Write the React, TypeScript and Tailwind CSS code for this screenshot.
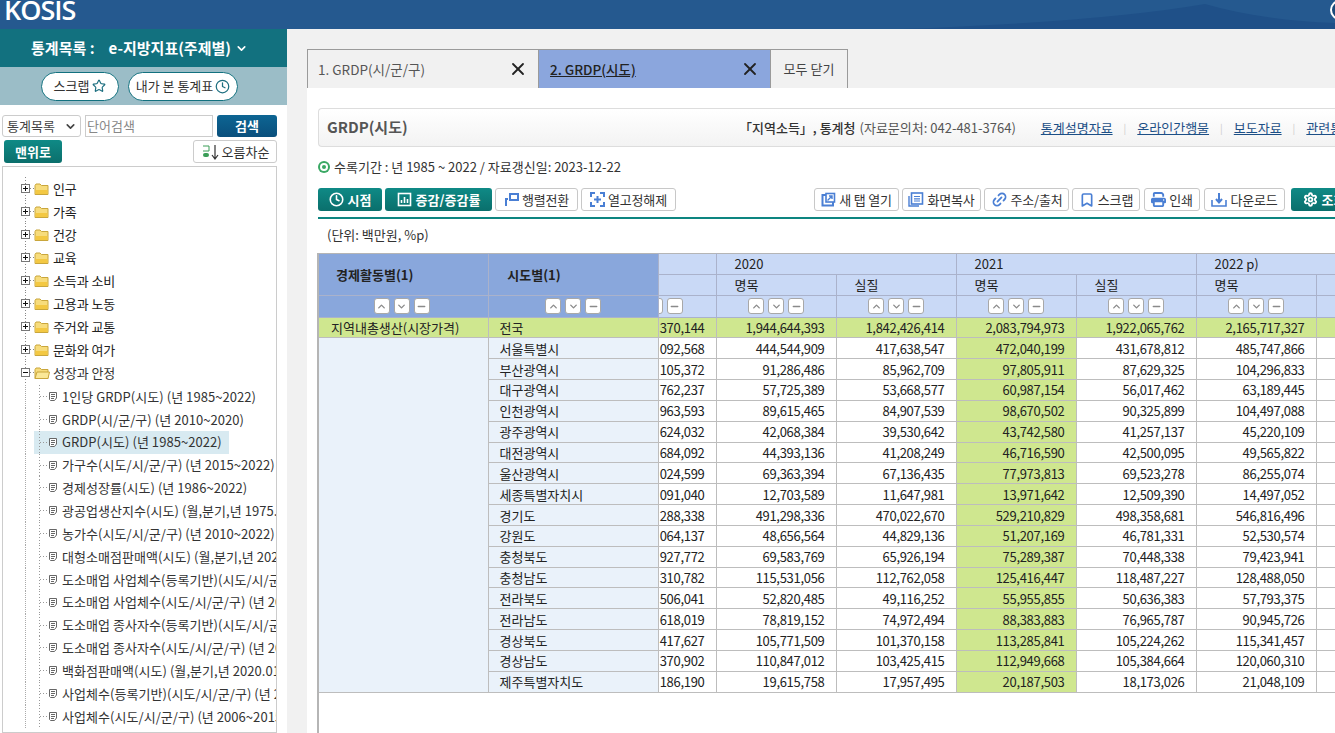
import { ChevronDown, ChevronUp, Minus, Star, Clock, X, Settings, Link2, Bookmark } from "lucide-react";
import { FaPrint } from "react-icons/fa6";

const FONT = { fontFamily: '"Noto Sans CJK KR", "Noto Sans", sans-serif' };

/* ---- data ---- */
const topics = ["인구", "가족", "건강", "교육", "소득과 소비", "고용과 노동", "주거와 교통", "문화와 여가"];

const docs = [
  "1인당 GRDP(시도) (년 1985~2022)",
  "GRDP(시/군/구) (년 2010~2020)",
  "GRDP(시도) (년 1985~2022)",
  "가구수(시도/시/군/구) (년 2015~2022)",
  "경제성장률(시도) (년 1986~2022)",
  "광공업생산지수(시도) (월,분기,년 1975.01~2023.11)",
  "농가수(시도/시/군/구) (년 2010~2022)",
  "대형소매점판매액(시도) (월,분기,년 2020.01~2023.11)",
  "도소매업 사업체수(등록기반)(시도/시/군/구) (년 2015~2021)",
  "도소매업 사업체수(시도/시/군/구) (년 2006~2015)",
  "도소매업 종사자수(등록기반)(시도/시/군/구) (년 2015~2021)",
  "도소매업 종사자수(시도/시/군/구) (년 2006~2015)",
  "백화점판매액(시도) (월,분기,년 2020.01~2023.11)",
  "사업체수(등록기반)(시도/시/군/구) (년 2015~2021)",
  "사업체수(시도/시/군/구) (년 2006~2015)",
];

const rows = [
  ["전국", "370,144", "1,944,644,393", "1,842,426,414", "2,083,794,973", "1,922,065,762", "2,165,717,327"],
  ["서울특별시", "092,568", "444,544,909", "417,638,547", "472,040,199", "431,678,812", "485,747,866"],
  ["부산광역시", "105,372", "91,286,486", "85,962,709", "97,805,911", "87,629,325", "104,296,833"],
  ["대구광역시", "762,237", "57,725,389", "53,668,577", "60,987,154", "56,017,462", "63,189,445"],
  ["인천광역시", "963,593", "89,615,465", "84,907,539", "98,670,502", "90,325,899", "104,497,088"],
  ["광주광역시", "624,032", "42,068,384", "39,530,642", "43,742,580", "41,257,137", "45,220,109"],
  ["대전광역시", "684,092", "44,393,136", "41,208,249", "46,716,590", "42,500,095", "49,565,822"],
  ["울산광역시", "024,599", "69,363,394", "67,136,435", "77,973,813", "69,523,278", "86,255,074"],
  ["세종특별자치시", "091,040", "12,703,589", "11,647,981", "13,971,642", "12,509,390", "14,497,052"],
  ["경기도", "288,338", "491,298,336", "470,022,670", "529,210,829", "498,358,681", "546,816,496"],
  ["강원도", "064,137", "48,656,564", "44,829,136", "51,207,169", "46,781,331", "52,530,574"],
  ["충청북도", "927,772", "69,583,769", "65,926,194", "75,289,387", "70,448,338", "79,423,941"],
  ["충청남도", "310,782", "115,531,056", "112,762,058", "125,416,447", "118,487,227", "128,488,050"],
  ["전라북도", "506,041", "52,820,485", "49,116,252", "55,955,855", "50,636,383", "57,793,375"],
  ["전라남도", "618,019", "78,819,152", "74,972,494", "88,383,883", "76,965,787", "90,945,726"],
  ["경상북도", "417,627", "105,771,509", "101,370,158", "113,285,841", "105,224,262", "115,341,457"],
  ["경상남도", "370,902", "110,847,012", "103,425,415", "112,949,668", "105,384,664", "120,060,310"],
  ["제주특별자치도", "186,190", "19,615,758", "17,957,495", "20,187,503", "18,173,026", "21,048,109"],
];

/* ---- tree icons ---- */
const FolderIcon = ({ open }: { open?: boolean }) => (
  <svg width="16" height="14" viewBox="0 0 16 14" className="shrink-0">
    <path d="M1 3.5 L2 2 H6 L7.5 3.5 H14 V12.5 H1 Z" fill="#f7dc7c" stroke="#c9a63c" />
    {open ? (
      <path d="M1 12.5 L3 6 H15.5 L14 12.5 Z" fill="#fbe897" stroke="#c9a63c" />
    ) : (
      <rect x="1.5" y="8" width="12" height="4" fill="#f3c843" />
    )}
  </svg>
);

const ExpandBox = ({ open }: { open?: boolean }) => (
  <svg width="31" height="23" viewBox="0 0 31 23" className="shrink-0">
    <path d="M22.5 0 V23" stroke="#888" strokeDasharray="1 2" />
    <path d="M27 11.5 H31" stroke="#888" strokeDasharray="1 2" />
    <rect x="18.5" y="7.5" width="8" height="8" fill="#fff" stroke="#777" />
    <path d="M20 11.5 H25" stroke="#111" />
    {!open && <path d="M22.5 9 V14" stroke="#111" />}
  </svg>
);

const DocIcon = () => (
  <svg width="24" height="23" viewBox="0 0 24 23" className="shrink-0">
    <path d="M5.5 0 V23" stroke="#999" strokeDasharray="1 2" />
    <path d="M6 11.5 H14" stroke="#999" strokeDasharray="1 2" />
    <path d="M15.5 7.5 H22.5 V13 L20.5 15.5 H16.5 L15.5 14.5 Z" fill="#fff" stroke="#666" />
    <path d="M17 9.5 H21 M17 11.5 H21 M17 13.5 H20" stroke="#666" />
  </svg>
);

const TopicRow = ({ label, open }: { label: string; open?: boolean }) => (
  <div className="flex h-[23px] items-center whitespace-nowrap">
    <ExpandBox open={open} />
    <FolderIcon open={open} />
    <span className={`ml-[3px] text-[13px] ${open ? "text-[#333]" : "text-[#222]"}`}>{label}</span>
  </div>
);

const DocRow = ({ label, active }: { label: string; active?: boolean }) => (
  <div className="flex h-[22.86px] items-center whitespace-nowrap">
    <span className="ml-[22px] h-[23px] w-[9px] shrink-0 border-l border-dotted border-[#aaa]" />
    <div className={`flex h-[23px] items-center pr-[7px] ${active ? "bg-[#d8eaf1]" : ""}`}>
      <DocIcon />
      <span className="ml-[4px] text-[13px] tracking-[0.05px] text-[#333]">{label}</span>
    </div>
  </div>
);

/* ---- sidebar ---- */
const Sidebar = () => (
  <aside className="flex h-[704px] w-[287px] shrink-0 flex-col overflow-hidden bg-white">
    <div className="flex h-[38px] items-center justify-center gap-[4px] bg-[#12717f] pr-[8px] text-[15px] font-bold text-white">
      <span className="mr-[10px]">통계목록 :</span>
      <span>e-지방지표(주제별)</span>
      <ChevronDown size={13} strokeWidth={3} />
    </div>
    <div className="flex h-[38px] items-center gap-[9px] bg-[#9bbdc7] pl-[41px]">
      <button className="flex h-[29px] w-[78px] items-center justify-center gap-[3px] rounded-full border border-[#12717f] bg-white text-[13px] text-[#333]">
        스크랩 <Star size={14} className="text-[#1d6f80]" />
      </button>
      <button className="flex h-[29px] w-[110px] items-center justify-center gap-[2px] rounded-full border border-[#12717f] bg-white text-[13px] text-[#333]">
        내가 본 통계표 <Clock size={15} className="text-[#1d6f80]" />
      </button>
    </div>

    <div className="mt-[10px] flex h-[22px] pl-[2px]">
      <div className="flex w-[79px] items-center justify-between rounded-[3px] border border-[#ccc] bg-white pl-[4px] pr-[3px] text-[13px] text-[#444]">
        통계목록 <ChevronDown size={13} strokeWidth={3} />
      </div>
      <div className="ml-[4px] flex w-[128px] items-center border border-[#ccc] pl-[1px] text-[13px] text-[#888]">단어검색</div>
      <button className="ml-[4px] w-[60px] rounded-[3px] bg-gradient-to-b from-[#0d6593] to-[#0a4f7c] text-[13px] font-bold text-white">
        검색
      </button>
    </div>
    <div className="mt-[3px] flex h-[23px] justify-between pl-[4px] pr-[10px]">
      <button className="w-[58px] rounded-[3px] bg-gradient-to-b from-[#0f8a86] to-[#0b6f6c] text-[13px] font-bold text-white">
        맨위로
      </button>
      <button className="flex w-[84px] items-center justify-center gap-[1px] rounded-[3px] border border-[#ccc] bg-white text-[13px] text-[#333]">
        <svg width="20" height="16" viewBox="0 0 20 16">
          <path d="M2 2 H8 V7 H2" fill="none" stroke="#3a9d57" />
          <rect x="2" y="9" width="6" height="4" rx="2" fill="#3a9d57" />
          <path d="M14 1 V14 M11 11 L14 15 L17 11" fill="none" stroke="#333" strokeWidth="1.2" />
        </svg>
        오름차순
      </button>
    </div>

    <div className="ml-[2px] mt-[3px] w-[275px] flex-1 overflow-hidden border border-[#ccc] pt-[10px] tracking-[-0.1px]">
      {topics.map((t) => (
        <TopicRow key={t} label={t} />
      ))}
      <TopicRow label="성장과 안정" open />
      <div className="h-[1px]" />
      {docs.map((d, i) => (
        <DocRow key={d} label={d} active={i === 2} />
      ))}
    </div>
  </aside>
);

/* ---- toolbar ---- */
const TealButton = ({ w, icon, label }: { w: string; icon: React.ReactNode; label: string }) => (
  <button className={`flex h-[23px] ${w} shrink-0 items-center justify-center gap-[4px] whitespace-nowrap rounded-[3px] bg-gradient-to-b from-[#0f8a86] to-[#0a6f6c] text-[13px] font-bold text-white`}>
    {icon}
    {label}
  </button>
);

const ToolButton = ({ w, icon, label }: { w: string; icon: React.ReactNode; label: string }) => (
  <button className={`flex h-[23px] ${w} shrink-0 items-center justify-center gap-[3px] whitespace-nowrap rounded-[3px] border border-[#c8c8c8] bg-white text-[13px] tracking-[-0.2px] text-[#333]`}>
    {icon}
    {label}
  </button>
);

const SortButtons = () => (
  <div className="flex h-full items-center justify-center gap-[4px]">
    {[ChevronUp, ChevronDown, Minus].map((Icon, i) => (
      <span key={i} className="flex h-[16px] w-[16px] shrink-0 items-center justify-center rounded-[3px] border border-[#a8a8a8] bg-white">
        <Icon size={11} strokeWidth={3} className="text-[#8a8a8a]" />
      </span>
    ))}
  </div>
);

/* ---- table ---- */
const headerBlue = "bg-[#89a7dc]";
const thinBorder = "border-b border-r border-[#aab2cb]";
const cols = ["w-[58px]", "w-[120px]", "w-[120px]", "w-[120px]", "w-[120px]", "w-[120px]", "w-[120px]"];

const StatTable = () => (
  <div className="ml-[10px] h-[480px] overflow-hidden border-l-2 border-[#b5b5b5]">
    <table className="w-[1117px] table-fixed border-collapse text-[13px] text-[#222]">
      <colgroup>
        <col className="w-[169px]" />
        <col className="w-[170px]" />
        {cols.map((c, i) => (
          <col key={i} className={c} />
        ))}
      </colgroup>
      <thead>
        <tr className="h-[21px] bg-[#c9d9f6]">
          <th rowSpan={2} className={`${headerBlue} ${thinBorder} border-t border-t-[#b5b5b5] pr-[57px] text-center text-[13px] font-bold`}>경제활동별(1)</th>
          <th rowSpan={2} className={`${headerBlue} ${thinBorder} border-t border-t-[#b5b5b5] pr-[78px] text-center text-[13px] font-bold`}>시도별(1)</th>
          <th className={`${thinBorder} border-t border-t-[#b5b5b5]`} />
          <th colSpan={2} className={`${thinBorder} border-t border-t-[#b5b5b5] pl-[18px] text-left font-normal`}>2020</th>
          <th colSpan={2} className={`${thinBorder} border-t border-t-[#b5b5b5] pl-[18px] text-left font-normal`}>2021</th>
          <th colSpan={2} className={`${thinBorder} border-t border-t-[#b5b5b5] pl-[18px] text-left font-normal`}>2022 p)</th>
        </tr>
        <tr className="h-[20px] bg-[#c9d9f6]">
          <th className={thinBorder} />
          {["명목", "실질", "명목", "실질", "명목", ""].map((h, i) => (
            <th key={i} className={`${thinBorder} pl-[18px] text-left font-normal`}>{h}</th>
          ))}
        </tr>
        <tr className="h-[22px] bg-[#c9d9f6]">
          <th className={`${headerBlue} ${thinBorder} pr-[3px]`}><SortButtons /></th>
          <th className={`${headerBlue} ${thinBorder}`}><SortButtons /></th>
          <th className={`${thinBorder} overflow-hidden`}>
            <div className="flex h-full justify-end pr-[33px]">
              <SortButtons />
            </div>
          </th>
          {[0, 1, 2, 3, 4].map((i) => (
            <th key={i} className={thinBorder}><SortButtons /></th>
          ))}
          <th className={thinBorder} />
        </tr>
      </thead>
      <tbody>
        {rows.map((r, ri) => {
          const total = ri === 0;
          return (
            <tr key={r[0]} className={`h-[20.85px] leading-none ${total ? "bg-[#cfe78f]" : "bg-white"}`}>
              {total && (
                <td className="border-b border-r border-[#bdbdbd] pl-[12px]">지역내총생산(시장가격)</td>
              )}
              {ri === 1 && <td rowSpan={17} className="border-b border-r border-[#bdbdbd] bg-[#eaf2fa]" />}
              <td className={`border-b border-r border-[#bdbdbd] pl-[11px] ${total ? "" : "bg-[#eaf2fa]"}`}>{r[0]}</td>
              {r.slice(1).map((v, ci) => (
                <td
                  key={ci}
                  className={`overflow-hidden whitespace-nowrap border-b border-r border-[#bdbdbd] pr-[11px] text-right tracking-[-0.3px] ${ci === 3 ? "bg-[#cfe78f]" : ""}`}
                >
                  {v}
                </td>
              ))}
              <td className="border-b border-r border-[#bdbdbd]" />
            </tr>
          );
        })}
      </tbody>
    </table>
  </div>
);

/* ---- main ---- */
const blue = "#4a7fd4";

const Main = () => (
  <main className="min-w-0 flex-1 overflow-hidden bg-[#f1f1f1] pl-[20px]">
    <div className="mt-[20px] flex h-[39px] text-[13.5px]">
      <div className="flex w-[232px] items-center justify-between border border-b-0 border-[#9a9a9a] pl-[10px] pr-[10px] text-[#555]">
        1. GRDP(시/군/구) <X size={20} strokeWidth={2.2} className="text-[#222]" />
      </div>
      <div className="flex w-[232px] items-center justify-between border-y border-r border-b-0 border-[#9a9a9a] bg-[#8ba6dd] pl-[11px] pr-[10px] font-medium text-[#222]">
        <span className="underline">2. GRDP(시도)</span> <X size={20} strokeWidth={2.2} className="text-[#222]" />
      </div>
      <div className="flex w-[77px] items-center justify-center border-y border-r border-b-0 border-[#9a9a9a] text-[13px] text-[#444]">모두 닫기</div>
    </div>

    <div className="h-[645px] bg-white">
      <div className="h-[20px]" />
      <div className="ml-[11px] flex h-[39px] items-center overflow-hidden whitespace-nowrap rounded-l-[4px] border border-r-0 border-[#ddd] bg-gradient-to-b from-white to-[#f3f3f3] pl-[8px] text-[13px]">
        <span className="w-[412px] shrink-0 text-[15px] font-bold text-[#555]">GRDP(시도)</span>
        <span className="font-medium text-[#333]">「지역소득」, 통계청</span>
        <span className="ml-[4px] text-[#555]">(자료문의처: 042-481-3764)</span>
        <span className="ml-[25px] text-[#1c4f86] underline">통계설명자료</span>
        <span className="mx-[11px] text-[10px] text-[#ccc]">|</span>
        <span className="text-[#1c4f86] underline">온라인간행물</span>
        <span className="mx-[11px] text-[10px] text-[#ccc]">|</span>
        <span className="text-[#1c4f86] underline">보도자료</span>
        <span className="mx-[11px] text-[10px] text-[#ccc]">|</span>
        <span className="text-[#1c4f86] underline">관련통계표</span>
      </div>

      <div className="ml-[11px] mt-[10px] flex h-[20px] items-center gap-[4px] text-[13px] text-[#333]">
        <span className="flex h-[12px] w-[12px] items-center justify-center rounded-full bg-[#3aa864]">
          <span className="flex h-[8px] w-[8px] items-center justify-center rounded-full bg-white">
            <span className="h-[4px] w-[4px] rounded-full bg-[#3aa864]" />
          </span>
        </span>
        수록기간 : 년 1985 ~ 2022 / 자료갱신일: 2023-12-22
      </div>

      <div className="ml-[11px] mt-[11px] flex h-[23px] w-[1100px]">
        <TealButton w="w-[64px]" icon={<Clock size={15} strokeWidth={2.5} />} label="시점" />
        <div className="ml-[3px]">
          <TealButton
            w="w-[107px]"
            icon={
              <svg width="15" height="15" viewBox="0 0 15 15">
                <rect x="1.5" y="1.5" width="12" height="12" fill="none" stroke="#fff" strokeWidth="1.6" />
                <path d="M4.5 11 V8 M7.5 11 V5 M10.5 11 V7" stroke="#fff" strokeWidth="1.6" />
              </svg>
            }
            label="증감/증감률"
          />
        </div>
        <div className="ml-[3px]">
          <ToolButton
            w="w-[83px]"
            icon={
              <svg width="15" height="14" viewBox="0 0 15 14">
                <rect x="6" y="1" width="8" height="6" fill="none" stroke={blue} strokeWidth="2" />
                <path d="M1 6 H4 M2 6 V13" stroke={blue} strokeWidth="2" fill="none" />
              </svg>
            }
            label="행렬전환"
          />
        </div>
        <div className="ml-[3px]">
          <ToolButton
            w="w-[95px]"
            icon={
              <svg width="15" height="15" viewBox="0 0 15 15">
                <path d="M1 5 V1 H5 M10 1 H14 V5 M14 10 V14 H10 M5 14 H1 V10" fill="none" stroke={blue} strokeWidth="2" />
                <path d="M7.5 4 V11 M4 7.5 H11" stroke={blue} strokeWidth="2" />
              </svg>
            }
            label="열고정해제"
          />
        </div>
        <div className="ml-[138px] flex gap-[3px]">
          <ToolButton
            w="w-[85px]"
            icon={
              <svg width="15" height="15" viewBox="0 0 15 15">
                <path d="M5 3 H1.5 V13.5 H12 V10" fill="none" stroke={blue} strokeWidth="2" />
                <rect x="5" y="1.5" width="8.5" height="8.5" fill="none" stroke={blue} strokeWidth="1.6" />
                <path d="M6.5 8.5 L11 4 M8 4 H11 V7" fill="none" stroke={blue} strokeWidth="1.4" />
              </svg>
            }
            label="새 탭 열기"
          />
          <ToolButton
            w="w-[79px]"
            icon={
              <svg width="16" height="15" viewBox="0 0 16 15">
                <path d="M1 4 V14 H11" fill="none" stroke={blue} strokeWidth="1.4" />
                <rect x="3.5" y="1" width="11" height="11" fill="none" stroke={blue} strokeWidth="1.6" />
                <path d="M6 4.5 H12 M6 6.8 H12 M6 9 H12" stroke={blue} strokeWidth="1.2" />
              </svg>
            }
            label="화면복사"
          />
          <ToolButton w="w-[85px]" icon={<Link2 size={17} strokeWidth={2.5} className="-rotate-45" color={blue} />} label="주소/출처" />
          <ToolButton w="w-[68px]" icon={<Bookmark size={16} strokeWidth={2.5} color={blue} />} label="스크랩" />
          <div className="ml-[1px]">
            <ToolButton w="w-[56px]" icon={<FaPrint size={15} color={blue} />} label="인쇄" />
          </div>
          <div className="ml-[1px]">
            <ToolButton
              w="w-[81px]"
              icon={
                <svg width="16" height="15" viewBox="0 0 16 15">
                  <path d="M1 8 V14 H15 V8" fill="none" stroke={blue} strokeWidth="1.6" />
                  <path d="M8 1 V10 M5 7 L8 10.5 L11 7" fill="none" stroke={blue} strokeWidth="2" />
                </svg>
              }
              label="다운로드"
            />
          </div>
          <div className="ml-[3px]">
            <TealButton w="w-[90px]" icon={<Settings size={15} strokeWidth={3} />} label="조회설정" />
          </div>
        </div>
      </div>

      <div className="ml-[11px] mt-[6px] h-[2px] bg-[#0d8580]" />
      <div className="ml-[20px] mt-[6px] flex h-[20px] items-center text-[13px] text-[#333]">(단위: 백만원, %p)</div>
      <div className="mt-[8px]">
        <StatTable />
      </div>
    </div>
  </main>
);

export default function App() {
  return (
    <div style={FONT} className="flex h-[733px] w-[1335px] flex-col overflow-hidden bg-[#f1f1f1]">
      <header className="relative flex h-[29px] shrink-0 items-start justify-between overflow-hidden bg-[#25598f] pl-[4px] text-white">
        <svg className="absolute left-0 top-0" width="1335" height="29" viewBox="0 0 1335 29">
          <path d="M1205 4 Q1260 20 1335 23 V29 H900 Q1100 22 1205 4 Z" fill="#1f5088" />
        </svg>
        <span className="relative mt-[-8px] text-[27px] font-semibold leading-[36px] tracking-[-1px]" style={{ fontFamily: '"Open Sans", sans-serif' }}>
          KOSIS
        </span>
        <span className="relative mr-[-15px] h-[20px] w-[20px] rounded-full border-2 border-white bg-[#1b4a7a]" />
      </header>
      <div className="flex min-h-0 flex-1">
        <Sidebar />
        <Main />
      </div>
    </div>
  );
}
